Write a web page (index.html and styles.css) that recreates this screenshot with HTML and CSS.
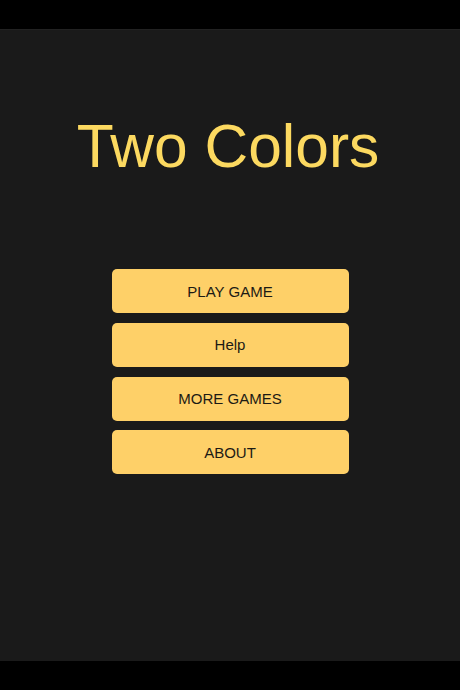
FILE: index.html
```html
<!DOCTYPE html>
<html>

<head>
    <meta name="viewport" content="width=device-width, initial-scale=1">
    <title>Two Colors</title>
    <link rel="stylesheet" href="styles.css">
</head>

<body>
    <div class="bar"></div>
    <div class="screen">
        <h1 class="title">Two Colors</h1>
        <div class="menu">
            <button class="button">PLAY GAME</button>
            <button class="button">Help</button>
            <button class="button">MORE GAMES</button>
            <button class="button">ABOUT</button>
        </div>
    </div>
    <div class="bar"></div>
</body>

</html>
```

FILE: styles.css
```css
:root {
    --bar-color: #000000;
    --bg-color: #1a1a1a;
    --title-color: #fcd960;
    --button-bg: #fed068;
    --button-text: #1c1a14;
}

html,
body {
    height: 100%;
}

body {
    margin: 0;
    padding: 0;
    background-color: var(--bar-color);
    font-family: "Liberation Sans", Arial, sans-serif;
    display: flex;
    flex-direction: column;
}

.bar {
    height: 29px;
    flex-shrink: 0;
    background-color: var(--bar-color);
}

.screen {
    flex: 1;
    background-color: var(--bg-color);
    border-top: 1px solid #222222;
    display: flex;
    flex-direction: column;
    align-items: center;
}

.title {
    margin: 86px 4px 0 0;
    font-size: 60.5px;
    line-height: 1;
    font-weight: normal;
    color: var(--title-color);
}

.menu {
    margin-top: 92.5px;
    width: 237px;
    display: flex;
    flex-direction: column;
    gap: 9.8px;
}

.button {
    height: 44px;
    border: none;
    border-radius: 5px;
    background-color: var(--button-bg);
    color: var(--button-text);
    font-family: "Liberation Sans", Arial, sans-serif;
    font-size: 15px;
    padding: 0;
    cursor: pointer;
}
```
